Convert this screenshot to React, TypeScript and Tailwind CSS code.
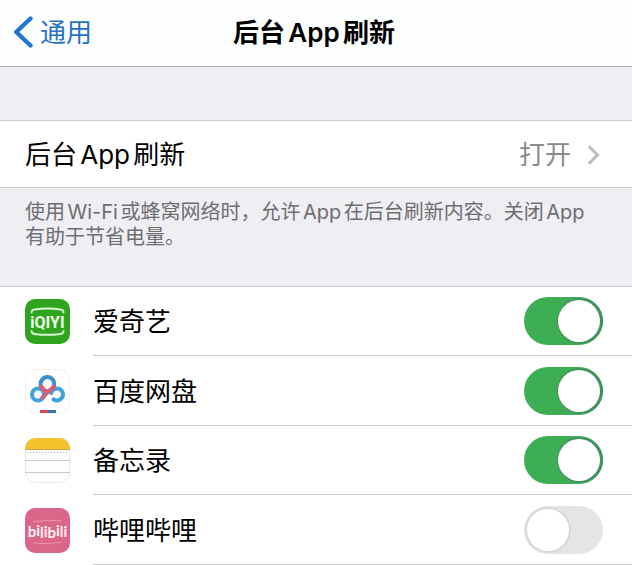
import { useState } from "react";
import type { ReactNode } from "react";

interface AppItem {
  id: string;
  name: string;
  icon: ReactNode;
  enabled: boolean;
}

const initialApps: AppItem[] = [
  { id: "iqiyi", name: "爱奇艺", icon: <IqiyiIcon />, enabled: true },
  { id: "netdisk", name: "百度网盘", icon: <NetdiskIcon />, enabled: true },
  { id: "notes", name: "备忘录", icon: <NotesIcon />, enabled: true },
  { id: "bilibili", name: "哔哩哔哩", icon: <BilibiliIcon />, enabled: false },
];

export default function App() {
  const [apps, setApps] = useState(initialApps);

  function toggle(id: string) {
    setApps(apps.map((app) => (app.id === id ? { ...app, enabled: !app.enabled } : app)));
  }

  return (
    <div lang="zh-CN" className="min-h-screen bg-[#efeef3] font-['Inter','Noto_Sans_CJK_SC',sans-serif] text-[26px] leading-9 text-black [text-autospace:normal]">
      <header className="grid grid-cols-[1fr_auto_1fr] items-center h-[67px] pl-3 pr-4 bg-[#fdfefe] border-b border-[#adacb1]">
        <a href="#general" className="flex items-center gap-1.5 text-[#2673c6]">
          <svg viewBox="0 0 22 34" className="w-[22px] h-[34px]" fill="none" stroke="#2474d4" strokeWidth="4.4" strokeLinecap="round" strokeLinejoin="round" aria-hidden="true">
            <path d="M18.5 2.500 4.2 16l14.3 13.500" />
          </svg>
          <span>通用</span>
        </a>
        <h1 className="font-semibold">后台App刷新</h1>
      </header>

      <main>
        <a href="#refresh" className="flex items-center justify-between mt-[53px] h-[68px] pt-px pl-[25px] pr-8 bg-white border-y border-[#c9c8cc]">
          <span>后台App刷新</span>
          <span className="flex items-center gap-4 text-[#8a8a8e]">
            打开
            <svg viewBox="0 0 13 20" className="w-[13px] h-5" fill="none" stroke="#bdbdc1" strokeWidth="3" aria-hidden="true">
              <path d="M1.8 1.4 10.6 10 1.8 18.6" />
            </svg>
          </span>
        </a>

        <p className="pl-[25px] pr-8 pt-3 pb-9 text-[20px] leading-[25px] text-[#6d6d72]">
          使用Wi-Fi或蜂窝网络时，允许App在后台刷新内容。关闭App有助于节省电量。
        </p>

        <ul className="bg-white border-t border-[#c9c8cc]">
          {apps.map((app) => (
            <li key={app.id} className="flex pl-[25px] odd:h-[69px] even:h-[70px]">
              <div className="flex items-center w-[68px]">{app.icon}</div>
              <div className="flex flex-1 items-center justify-between pr-[29px] border-b border-[#c9c8cc]">
                <label htmlFor={app.id} className="pt-0.5">{app.name}</label>
                <Switch id={app.id} checked={app.enabled} onChange={() => toggle(app.id)} />
              </div>
            </li>
          ))}
        </ul>
      </main>
    </div>
  );
}

function Switch({ id, checked, onChange }: { id: string; checked: boolean; onChange: () => void }) {
  return (
    <input
      id={id}
      type="checkbox"
      role="switch"
      checked={checked}
      onChange={onChange}
      className="appearance-none shrink-0 flex items-center w-[79px] h-12 px-[3px] rounded-full cursor-pointer bg-[#e5e5e6] checked:bg-[#3eae55] checked:justify-end before:size-[42px] before:rounded-full before:bg-white before:shadow-[0_0_0_2px_#d9d9da] checked:before:shadow-[1px_0_0_2px_#43915f]"
    />
  );
}

function IqiyiIcon() {
  return (
    <svg viewBox="0 0 45 45" className="size-[45px]" aria-hidden="true">
      <rect width="45" height="45" rx="10" fill="#2fa51f" />
      <g fill="none" stroke="#d9f5d0" strokeWidth="2" strokeLinecap="round">
        <path d="M6.500 13.500Q6.500 10.800 9.500 10.500Q22.500 8.600 35.500 10.500Q38.500 10.800 38.500 13.500" />
        <path d="M6.500 32Q6.500 34.500 9.500 34.900Q22.500 36.800 35.500 34.900Q38.500 34.500 38.500 32" />
      </g>
      <text x="22.500" y="28.500" textAnchor="middle" fill="#f0ffea" fontSize="16" fontWeight="700" fontFamily="Roboto, sans-serif">iQIYI</text>
    </svg>
  );
}

function NetdiskIcon() {
  return (
    <svg viewBox="0 0 45 45" className="size-[45px]" aria-hidden="true">
      <rect x=".5" y=".5" width="44" height="44" rx="10" fill="#fefefe" stroke="#f1f1f3" />
      <g fill="none" strokeWidth="4" strokeLinecap="round">
        <circle cx="13" cy="25.500" r="6" stroke="#3da3d8" />
        <path d="M26.200 24A6 6 0 1 1 28.500 30.300" stroke="#3da3d8" />
        <path d="M15.800 16.500A6.800 6.800 0 1 1 29 16.500" stroke="#3b8fca" />
        <path d="M16.200 17.500Q18 21 22.400 22.800Q26.800 21 28.600 17.500" stroke="#de5870" />
        <path d="M25 20.800 17.200 28.800" stroke="#cf6280" />
      </g>
      <path d="M15 41h8v3h-8z" fill="#d64a5e" />
      <path d="M23 41h8v3h-8z" fill="#3579b5" />
    </svg>
  );
}

function NotesIcon() {
  return (
    <svg viewBox="0 0 45 45" className="size-[45px]" aria-hidden="true">
      <rect x=".5" y=".5" width="44" height="44" rx="10" fill="#fefefe" stroke="#ebebed" />
      <path d="M0 11.500V10A10 10 0 0 1 10 0h25a10 10 0 0 1 10 10v1.500z" fill="#f6c22d" />
      <path d="M0 11.500h45" stroke="#c9a24a" />
      <path d="M2 14.500h41" stroke="#c5b7b6" strokeDasharray="1 2" />
      <path d="M0 22.500h45M0 34.500h45" stroke="#cbc9d2" />
    </svg>
  );
}

function BilibiliIcon() {
  return (
    <svg viewBox="0 0 45 45" className="size-[45px]" aria-hidden="true">
      <rect width="45" height="45" rx="10" fill="#dc6689" />
      <path d="M8 14q14-3 29-1M9 35q14 2 28-1" fill="none" stroke="#e995ad" strokeWidth="1" />
      <text x="22.500" y="29" textAnchor="middle" fill="#fff3f6" fontSize="15" fontWeight="700" fontFamily="Lato, sans-serif">
        b<tspan dy="-1">i</tspan><tspan dy="2">l</tspan><tspan dy="-1">i</tspan><tspan dy="1">b</tspan><tspan dy="-2">i</tspan><tspan dy="1">l</tspan>i
      </text>
    </svg>
  );
}
